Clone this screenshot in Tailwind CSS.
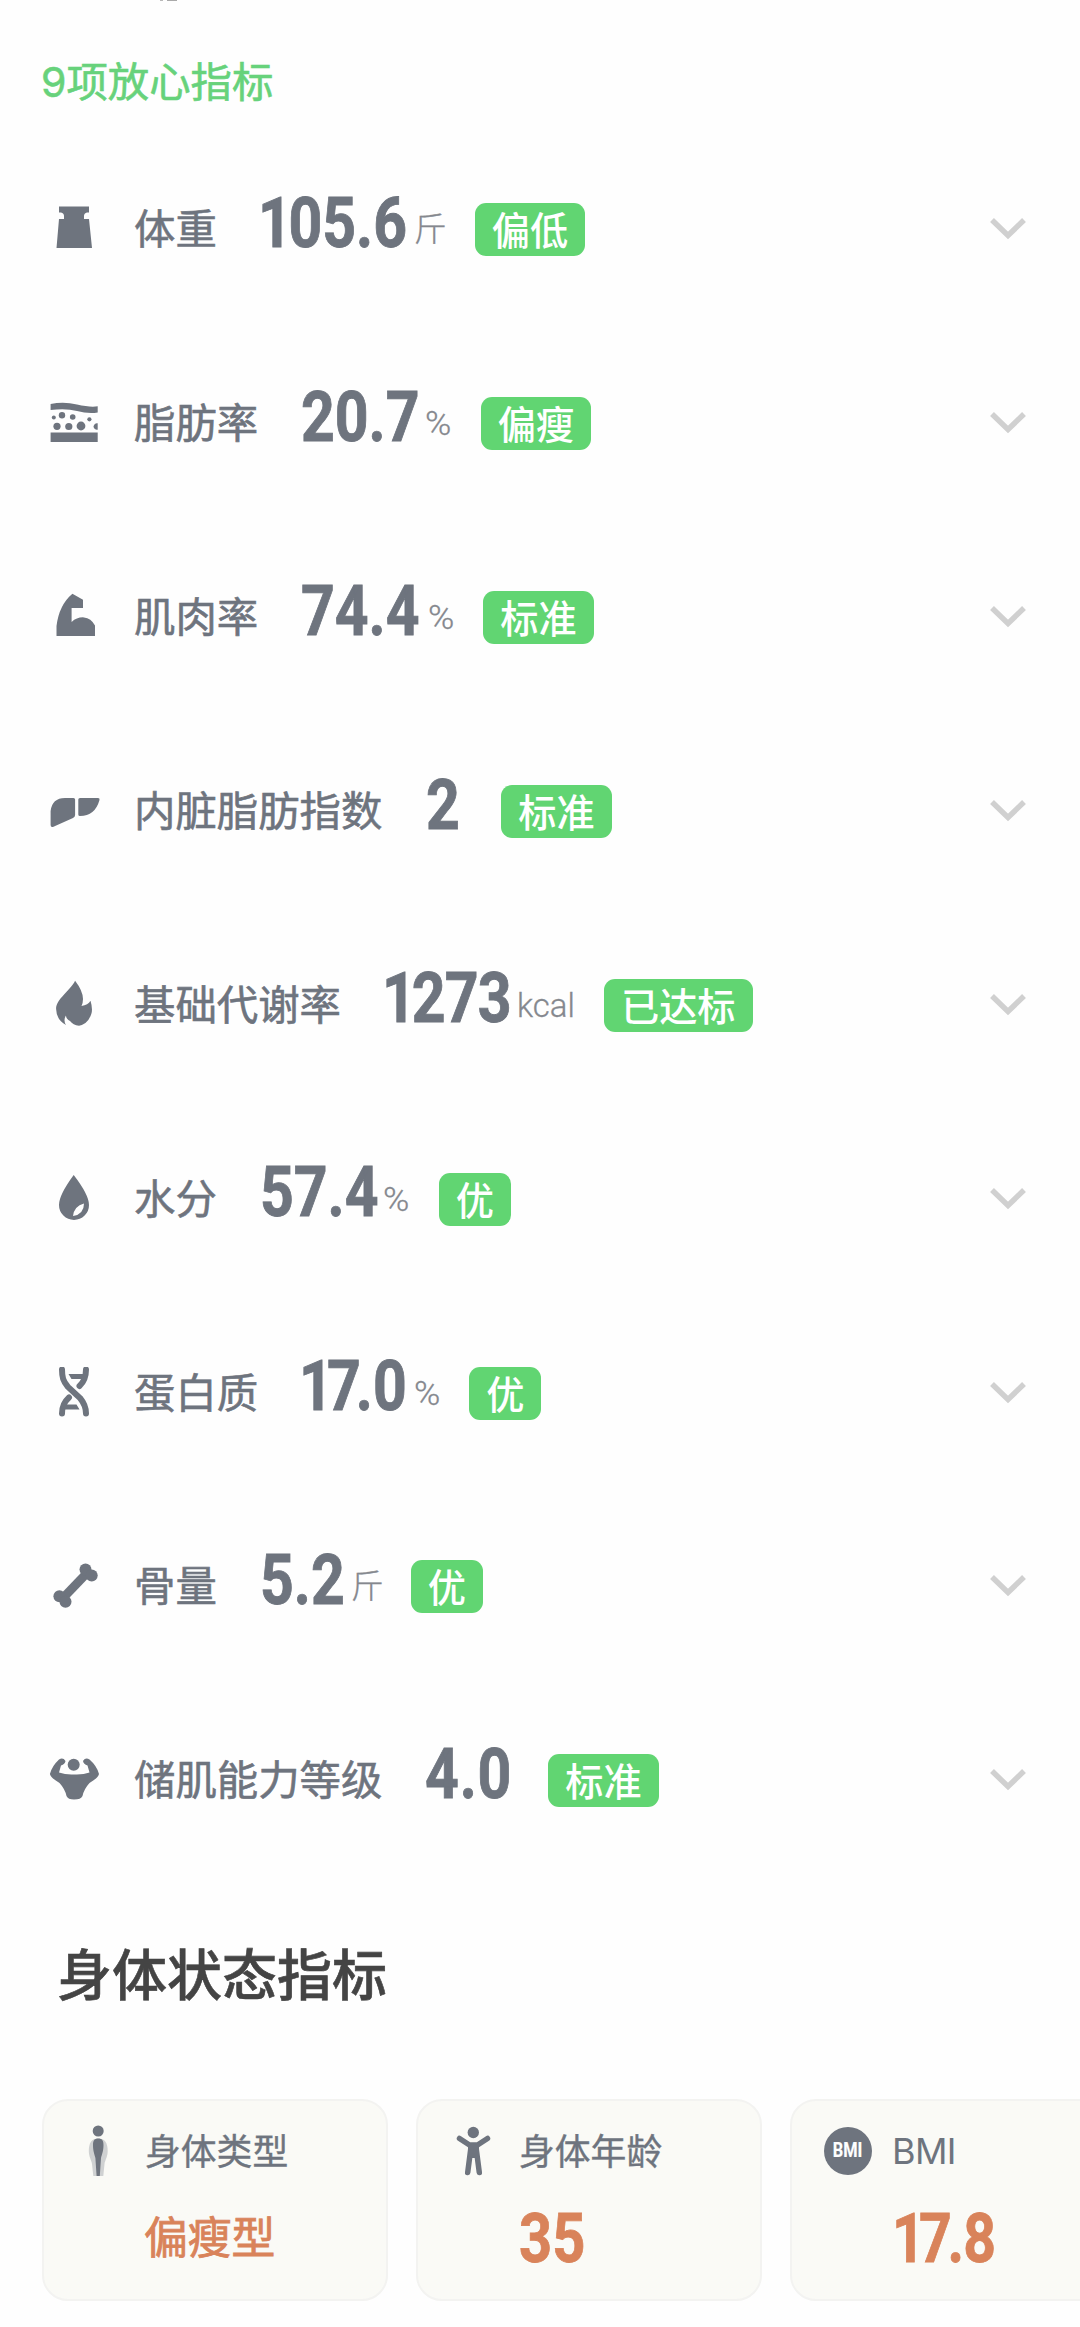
<!DOCTYPE html>
<html lang="zh-CN">
<head>
<meta charset="utf-8">
<meta name="viewport" content="width=device-width">
<title>身体指标</title>
<script src="https://cdn.jsdelivr.net/npm/@tailwindcss/browser@4"></script>
</head>
<body class="bg-[#fefefe]">
<div class="w-[1080px] h-[2327px] overflow-hidden flex flex-col text-[#6e747e] font-['Noto_Sans_CJK_SC',sans-serif]">
  <div class="h-[2px] shrink-0 flex gap-1 pl-[160px]"><i class="w-[3px] h-px bg-[#b9b9b9]"></i><i class="w-[10px] h-px bg-[#a9a9a9]"></i></div>
  <h2 class="h-[130.5px] shrink-0 pt-[54px] pl-[41px] text-[41.4px] leading-[46px] text-[#67d27b] font-normal [-webkit-text-stroke:0.6px]"><span class="font-['Inter'] text-[41px]">9</span>项放心指标</h2>

  <main id="rows" class="shrink-0"></main>

  <h2 class="h-[221.5px] shrink-0 pt-[64px] pl-[57px] text-[55px] leading-[60px] font-medium text-[#444] [-webkit-text-stroke:0.6px_#444]">身体状态指标</h2>

  <section class="flex gap-[28px] pl-[42px] shrink-0">
    <article class="w-[346px] h-[202px] shrink-0 rounded-[26px] border-2 border-[#f3f3f1] bg-[#fafaf6] pt-[24px] pl-[26px]">
      <div class="flex items-center h-[52px]">
        <svg class="w-[60px] h-[52px] mr-[15px] shrink-0" viewBox="0 0 60 52"><g fill="currentColor"><path opacity=".3" d="M28.200 13.500C35 13.500 37.700 18 37.700 26C37.700 32 35 35 34.500 39L33.300 51H23.300L22 39C21.500 35 18.800 32 18.800 26C18.800 18 21.500 13.500 28.200 13.500Z"/><circle cx="28.200" cy="6" r="5.500"/><path d="M28.200 13.500C32 13.500 33.500 15.500 33.500 20C33.500 26 32 29 31 33L29.800 51H26.600L25.400 33C24.400 29 23 26 23 20C23 15.500 24.500 13.500 28.200 13.500Z"/></g></svg>
        <span class="text-[35.8px] leading-[36px] mb-[4px] [-webkit-text-stroke:0.4px]">身体类型</span>
      </div>
      <div class="pl-[74px] pt-[33px] text-[43.8px] leading-[50px] text-[#d9835a] [-webkit-text-stroke:0.8px]">偏瘦型</div>
    </article>
    <article class="w-[346px] h-[202px] shrink-0 rounded-[26px] border-2 border-[#f3f3f1] bg-[#fafaf6] pt-[24px] pl-[26px]">
      <div class="flex items-center h-[52px]">
        <svg class="w-[60px] h-[52px] mr-[15px] shrink-0" viewBox="0 0 60 52"><circle cx="29.300" cy="7.500" r="5.700" fill="currentColor"/><path d="M24 19H35V33H24Z" fill="currentColor"/><path d="M15.500 13.500L25.500 20H33.500L43.500 13.500M27 22L23.700 47.500M32 22L35.300 47.500" fill="none" stroke="currentColor" stroke-width="5.500" stroke-linecap="round" stroke-linejoin="round"/></svg>
        <span class="text-[35.8px] leading-[36px] mb-[4px] [-webkit-text-stroke:0.4px]">身体年龄</span>
      </div>
      <div class="pl-[75px] pt-[28px] font-['Roboto'] font-bold text-[68px] leading-[68px] text-[#d9835a]"><span class="inline-block origin-left scale-x-[.85] [-webkit-text-stroke:0.8px]">35</span></div>
    </article>
    <article class="w-[346px] h-[202px] shrink-0 rounded-[26px] border-2 border-[#f3f3f1] bg-[#fafaf6] pt-[24px] pl-[26px]">
      <div class="flex items-center h-[52px]">
        <span class="ml-[6px] mr-[20px] size-[48px] rounded-full bg-[#6e747e] text-white flex items-center justify-center font-['Roboto'] font-bold text-[19.5px] leading-none shrink-0"><span class="scale-x-[.84] [-webkit-text-stroke:0.2px]">BMI</span></span>
        <span class="font-['Inter'] text-[36px] leading-[40px] tracking-[-0.6px]">BMI</span>
      </div>
      <div class="pl-[74px] pt-[28px] font-['Roboto'] font-bold text-[68px] leading-[68px] text-[#d9835a]"><span class="inline-block origin-left scale-x-[.84] [-webkit-text-stroke:0.8px]"><span class="tracking-[-7px]">1</span><span class="tracking-[-5px]">7</span><span class="tracking-[-1px]">.</span>8</span></div>
    </article>
  </section>
</div>
<script>
const icons = {
  weight: '<path d="M11 3.500H41V9.500H39Q36 10 36 13V16H41L44 45H8.500L11 16H16V13Q16 10 13 9.500H11Z"/>',
  fat: '<path d="M2.600 7Q16 4.500 29 7.500T49.700 9.300V15.500Q40 17 29 14T2.600 13ZM2.600 35.600H49.700V45H2.600Z"/><circle cx="5.800" cy="20.600" r="2"/><circle cx="14" cy="18.300" r="3.200"/><circle cx="24.700" cy="20" r="2.800"/><circle cx="41.400" cy="22.300" r="2.100"/><circle cx="9" cy="29.300" r="3.600"/><circle cx="20.800" cy="29.500" r="3.600"/><circle cx="33" cy="29" r="4.400"/><path d="M49.700 26.300V32.700A3.300 3.300 0 1 1 49.700 26.300Z"/>',
  arm: '<path d="M8.500 45V35Q11 14 24.400 2.700L35 8.700V17H23.600V31Q29 26 36 26.400Q43 27 47 34.400V45Z"/>',
  liver: '<path d="M2.600 40V26Q4 13 17 12.900H25.500Q27.100 12.900 27.100 14.500V30Q27.100 32 25 33L6 41.500Q2.600 43 2.600 40ZM30.300 14.500Q30.300 12.900 32 12.900H50Q52 13 51.500 15Q47 31 32 31Q30.300 31 30.300 29.500Z"/>',
  flame: '<path d="M27.100 1.700Q35 12 35 20Q35 24 33.500 27Q40 26 42.500 21.700Q45 30 43.300 35Q40 45 31 46.700Q25 46 22 42Q18 40 18 36.500Q15 41 18 46Q8.500 41 8.100 30C8 20 22 12 27.100 1.700Z"/>',
  drop: '<path fill-rule="evenodd" d="M25.700 2.100Q41 22 41 32A15 15 0 0 1 11 32Q11 22 25.700 2.100ZM36 30.400Q26 33 25 43.100Q36 41 36 30.400Z"/>',
  dna: '<path d="M14 2.500C14 10 15 14 20 20L32 31C37 37 38 41 38 46.500M38 2.500C38 9 37 14 31.500 19M14 46.500C14 39 16 35 21 30.500" fill="none" stroke="currentColor" stroke-width="6" stroke-linecap="round"/><path d="M20.500 7H37V12H23.500ZM16 37.500H28.500L31.500 42.500H16Z"/>',
  bone: '<path d="M39 13L15 38" stroke="currentColor" stroke-width="9"/><circle cx="37.500" cy="9.500" r="6"/><circle cx="43.700" cy="15.500" r="6"/><circle cx="11.400" cy="36.300" r="6"/><circle cx="17.500" cy="41.700" r="6"/>',
  strong: '<circle cx="25.700" cy="10.800" r="6"/><path d="M11 5.500Q15 3 17.500 7Q17 10 13 11.500L11 18.500Q18 21 26 20.500Q35 21 41.500 18.500L39.500 11.500Q35.500 10 35 7Q37.500 3 41.500 5.500Q49 12 51 20Q50 24 41.500 29Q36 35 34.500 42Q33 45.500 26 45.500Q20 45.500 18.500 42Q17 35 11.500 29Q3 24 1.900 20Q4 12 11 5.500Z"/>'
};
// icon, label, value, value width, unit, unit width, tag, indent of the value
const rows = [
  ['weight', '体重', '<span class="tracking-[-4px]">1</span>05.6', 156, '斤', 61, '偏低', 0],
  ['fat', '脂肪率', '20.7', 126, '%', 55.5, '偏瘦', 2],
  ['arm', '肌肉率', '74.4', 129, '%', 55, '标准', 2],
  ['liver', '内脏脂肪指数', '2', 78, '', 0, '标准', 3],
  ['flame', '基础代谢率', '<span class="tracking-[-5px]">1</span><span class="tracking-[-1px]">27</span>3', 135, 'kcal', 87, '已达标', 0],
  ['drop', '水分', '57.4', 125, '%', 56, '优', 2],
  ['dna', '蛋白质', '<span class="tracking-[-7px]">1</span><span class="tracking-[-6px]">7</span>.0', 115, '%', 55, '优', 0],
  ['bone', '骨量', '5.2', 93, '斤', 60, '优', 2],
  ['strong', '储肌能力等级', '<span class="tracking-[1px]">4.</span>0', 125, '', 0, '标准', 2]
];
document.getElementById('rows').innerHTML = rows.map(([icon, label, value, vw, unit, uw, tag, indent]) => `
  <div class="h-[193.87px] flex items-center pl-[48px] pr-[53px]">
    <svg class="size-[52px] shrink-0 mr-[34px]" viewBox="0 0 52 52" fill="currentColor">${icons[icon]}</svg>
    <span class="text-[41.4px] leading-[42px] mb-[6px] mr-[41px] whitespace-nowrap [-webkit-text-stroke:0.6px]">${label}</span>
    <span class="shrink-0 mb-[13px] font-['Roboto'] font-bold text-[71px] leading-[72px] whitespace-nowrap" style="width:${vw}px;padding-left:${indent}px"><span class="inline-block origin-left scale-x-[.83] [-webkit-text-stroke:0.9px]">${value}</span></span>
    <span class="shrink-0 mt-[2px] font-['Roboto','Noto_Sans_CJK_SC'] font-light text-[33px] leading-[36px] text-[#85888e] whitespace-nowrap [-webkit-text-stroke:0.3px]" style="width:${uw}px"><span class="${unit === '%' ? 'inline-block origin-left scale-x-[1.08]' : ''}">${unit}</span></span>
    <span class="shrink-0 h-[53px] mt-px rounded-[11px] bg-[#61d572] px-[17px] text-[38.2px] leading-[51px] font-medium text-white whitespace-nowrap">${tag}</span>
    <svg class="w-[38px] h-[26px] ml-auto shrink-0" viewBox="0 0 38 26"><path d="M3 4L19 19.500L35 4" fill="none" stroke="#d0d0d0" stroke-width="5.500"/></svg>
  </div>`).join('');
</script>
</body>
</html>
